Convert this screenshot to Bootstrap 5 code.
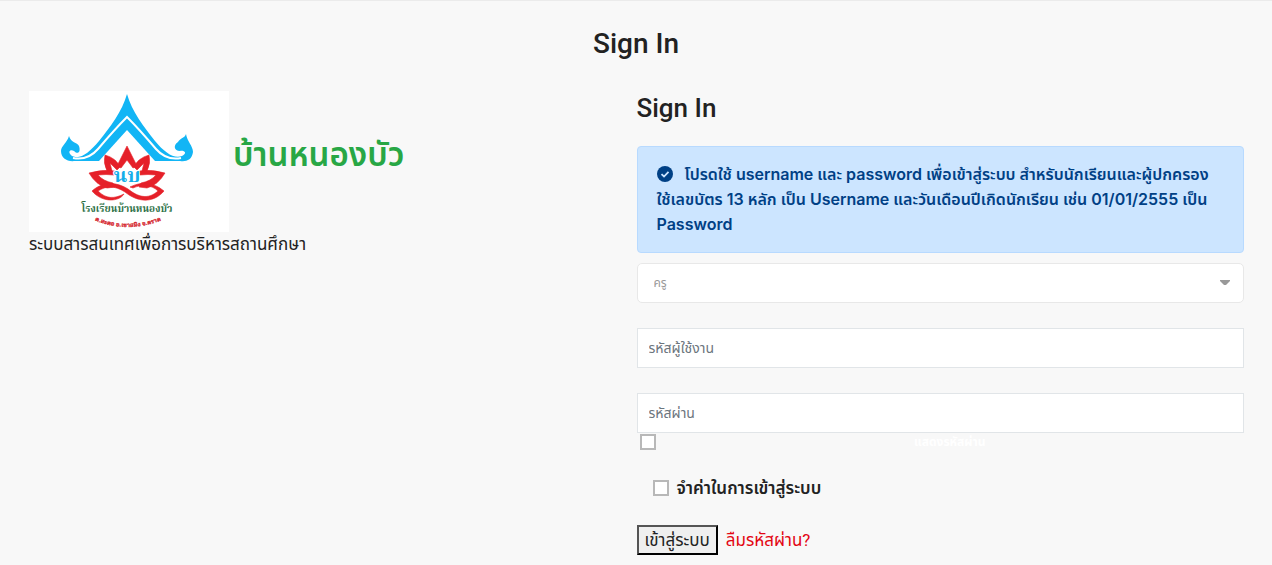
<!DOCTYPE html>
<html lang="th">
<head>
<meta charset="utf-8">
<meta name="viewport" content="width=device-width, initial-scale=1">
<title>Sign In</title>
<link href="https://cdn.jsdelivr.net/npm/bootstrap@5.3.0/dist/css/bootstrap.min.css" rel="stylesheet">
<style>
body{background:#f8f8f8;color:#222;font-family:Roboto,"Noto Sans Thai","Noto Sans",sans-serif;font-size:17px;line-height:24px;border-top:1px solid #ebebeb}
.page-head{font-size:28px;line-height:34px;font-weight:500;padding:26px 0 30px}
.sign-wrap{padding:0 28px 0 29px}
.brand-logo{width:200px;height:141px;background:#fff}
.school{font-size:33px;line-height:40px;font-weight:600;color:#28a745;padding-bottom:14px}
.form-head{font-size:26px;line-height:34px;font-weight:500;margin-bottom:21px}
.notice{background:#cce5ff;border:1px solid #b8daff;color:#004085;border-radius:4px;padding:15px 19px;line-height:25px;font-family:Inter,"Noto Sans Thai",sans-serif;font-size:16px;font-weight:600;margin-bottom:10px}
.notice svg{width:16px;height:16px;margin-right:12px;vertical-align:-2px}
.field{height:40px;border:1px solid #e1e5e8;border-radius:0;font-size:14px;color:#666;padding:0 11px;box-shadow:none}
.field::placeholder{color:#6c757d}
.gap-below{margin-bottom:25px}
.role{border-radius:5px;border-color:#e8e8e8;font-size:12px;color:#999;padding:0 16px;background:#fff url("data:image/svg+xml,%3Csvg xmlns='http://www.w3.org/2000/svg' viewBox='0 0 10 6'%3E%3Cpath fill='%23999' d='M0 0h10v1L6 5H4L0 1z'/%3E%3C/svg%3E") no-repeat right 13px center/10px 6px}
.tick{appearance:none;flex:none;width:16px;height:16px;margin:0;border:2px solid #b8b8b8;background:#fff}
.tick:checked{background:#b8b8b8}
.show-row{padding:1px 0 0 3px}
.show-label{font-size:12px;line-height:16px;font-weight:700;color:#fff}
.remember{font-weight:600;line-height:24px}
.remember-row{padding:26px 0 25px}
.enter{background:#efefef;border:2px outset #000;border-color:#555 #000 #000 #555;color:#222;padding:0 6px;height:30px;line-height:24px}
.forgot{color:#e30613}
</style>
</head>
<body>
<h1 class="page-head text-center m-0">Sign In</h1>
<main class="container-fluid sign-wrap">
<div class="row g-0">
<section class="col-6">
<div class="d-flex align-items-center gap-1">
<svg class="brand-logo" viewBox="0 0 200 141" role="img" aria-label="โรงเรียนบ้านหนองบัว">
<path fill="#12b5f5" d="M98 3C103 21 115 36 126 50C136 62 145 68 153 65C159 62 155 59 151 60C145 60 144 54 149 51C151 47 156 47 157 43C158 50 164 55 164 61C163 69 157 71 151 70H125L98 40L71 70H46C38 71 32 67 32 60C32 55 38 52 40 45C42 52 48 51 50 55C52 61 49 64 45 60C41 58 38 61 43 65C51 69 60 62 70 50C81 36 93 21 98 3Z"/>
<path d="M44 67C54 69 62 66 69 58Q86 38 98 26Q110 38 127 58C134 66 142 69 152 67" fill="none" stroke="#fff" stroke-width="2"/>
<path d="M98 39L126 70H70Z" fill="#fff"/>
<g fill="#e52029" stroke="#e52029" stroke-width=".6">
<path d="M98 55L108 75L104 77L98 69L92 77L88 75Z"/>
<path d="M76 64Q87 67 91 76L88 79L81 72L83 80L78 80Q74 72 76 64ZM120 64Q109 67 105 76L108 79L115 72L113 80L118 80Q122 72 120 64Z"/>
<path d="M60 82Q72 78 86 80L85 84Q77 83 69 84Q74 90 84 92L86 96L78 97Q67 94 60 82ZM136 82Q124 78 110 80L111 84Q119 83 127 84Q122 90 112 92L110 96L118 97Q129 94 136 82Z"/>
<path d="M63 100C73 91 86 90 99 98C109 106 119 109 129 100C123 94 113 93 104 97L101 96C113 90 124 91 135 100C124 113 108 111 96 101C85 94 77 95 69 100C77 108 85 108 95 103C90 111 73 112 63 100Z"/></g>
<g text-anchor="middle" font-family="'Noto Serif Thai','Noto Sans Thai',sans-serif">
<text x="98" y="91" font-size="20" font-weight="700" fill="#14aeea" stroke="#fff" stroke-width="2" paint-order="stroke">นบ</text>
<text x="98" y="121" font-size="10" font-weight="700" fill="#2b7045">โรงเรียนบ้านหนองบัว</text>
<path id="arc" d="M62 128Q98 144 136 128" fill="none"/>
<text font-size="6" font-weight="700" fill="#d51f2c" stroke="#d51f2c" stroke-width=".3"><textPath href="#arc" startOffset="50%">ต.สะตอ อ.เขาสมิง จ.ตราด</textPath></text></g>
</svg>
<h2 class="school m-0">บ้านหนองบัว</h2>
</div>
<div>ระบบสารสนเทศเพื่อการบริหารสถานศึกษา</div>
</section>
<section class="col-6">
<h2 class="form-head">Sign In</h2>
<div class="notice" role="alert"><svg viewBox="0 0 16 16" aria-hidden="true"><circle cx="8" cy="8" r="8" fill="#004085"/><path d="M4.5 8.2L7 10.5L11.5 5.8" fill="none" stroke="#cce5ff" stroke-width="1.8"/></svg>โปรดใช้ username และ password เพื่อเข้าสู่ระบบ สำหรับนักเรียนและผู้ปกครอง<br>ใช้เลขบัตร 13 หลัก เป็น Username และวันเดือนปีเกิดนักเรียน เช่น 01/01/2555 เป็น Password</div>
<form>
<select class="form-select field role gap-below" aria-label="ประเภทผู้ใช้"><option>ครู</option></select>
<input class="form-control field gap-below" type="text" placeholder="รหัสผู้ใช้งาน" aria-label="รหัสผู้ใช้งาน">
<input class="form-control field" type="password" placeholder="รหัสผ่าน" aria-label="รหัสผ่าน">
<div class="d-flex show-row"><input class="tick" type="checkbox" id="show"><label class="show-label flex-fill text-center" for="show">แสดงรหัสผ่าน</label></div>
<div class="d-flex align-items-center gap-2 ms-3 remember-row"><input class="tick" type="checkbox" id="remember"><label class="remember" for="remember">จำค่าในการเข้าสู่ระบบ</label></div>
<div class="d-flex align-items-center gap-2"><button class="enter" type="submit">เข้าสู่ระบบ</button><a class="forgot text-decoration-none" href="#">ลืมรหัสผ่าน?</a></div>
</form>
</section>
</div>
</main>
<script src="https://cdn.jsdelivr.net/npm/bootstrap@5.3.0/dist/js/bootstrap.bundle.min.js"></script>
</body>
</html>
